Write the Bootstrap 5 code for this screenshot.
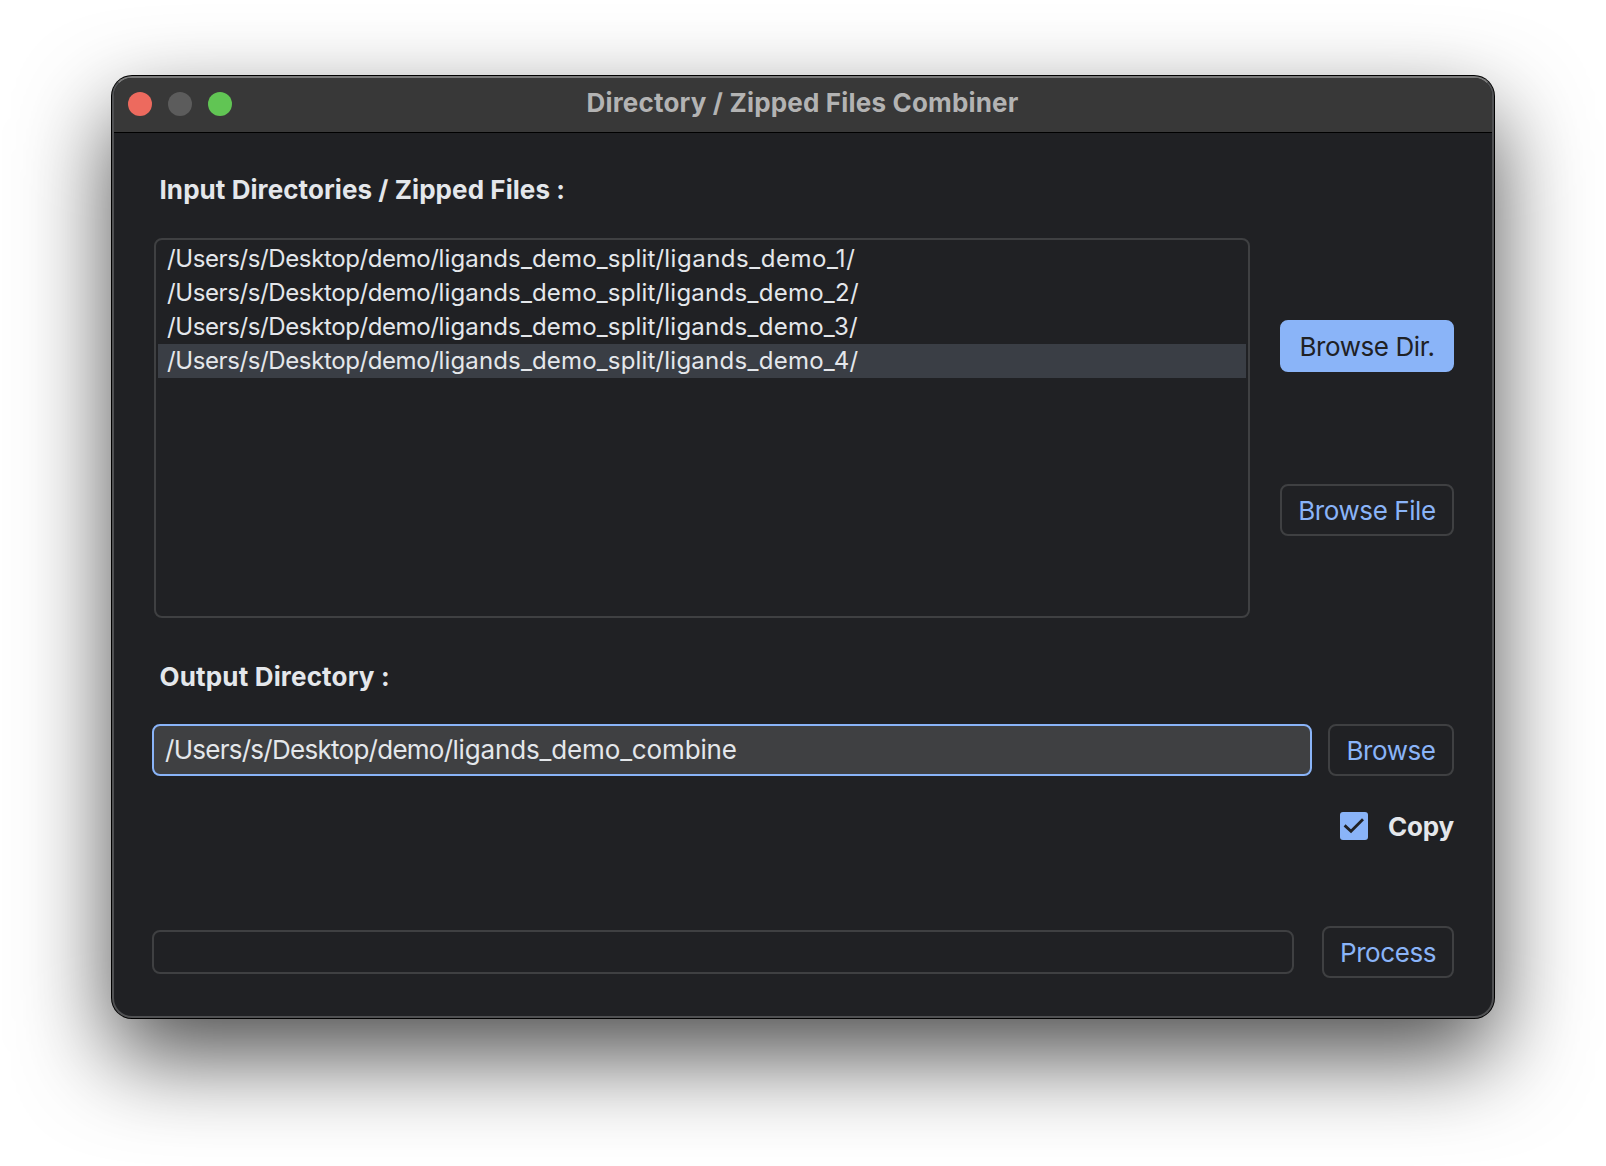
<!DOCTYPE html>
<html lang="en">
<head>
<meta charset="utf-8">
<meta name="viewport" content="width=device-width, initial-scale=1">
<title>Directory / Zipped Files Combiner</title>
<link href="https://cdn.jsdelivr.net/npm/bootstrap@5.3.0/dist/css/bootstrap.min.css" rel="stylesheet">
<style>
  body { background: #fff; font-family: Inter, "Liberation Sans", sans-serif; font-size: 26px; line-height: 32px; color: #e4e7eb; min-height: 100vh; overflow: hidden; }
  .app-window { width: 1382px; height: 942px; margin: 76px 0 0 112px; background: #202124; border: 2px solid #505153; border-top-color: #7a7a7a; border-radius: 20px; box-shadow: 0 0 0 1px #000, 0 38px 92px 0 rgba(0,0,0,.7); }
  .titlebar { height: 55px; padding: 0 14px 2px; background: #383838; border-bottom: 1px solid #000; border-radius: 18px 18px 0 0; }
  .lights { gap: 16px; width: 120px; }
  .light { width: 24px; height: 24px; border-radius: 50%; }
  .light-close { background: #ed6a5e; }
  .light-min { background: #5c5c5c; }
  .light-max { background: #61c554; }
  .titlebar-text { color: #b3b3b3; font-weight: 700; letter-spacing: .18px; margin: 0 1px 2px 0; font-size: 26px; line-height: 32px; }
  .app-body { padding: 41px 38px 0; }
  .field-title { font-size: 26px; line-height: 32px; font-weight: 700; margin: 0; padding-left: 7.5px; letter-spacing: .07px; }
  .field-title-out { letter-spacing: .17px; margin-top: 43px; }
  .path-list { width: 1096px; height: 380px; margin-left: 2px; padding: 2px; border: 2px solid #3f4042; border-radius: 8px; }
  .path-list .list-group-item { background: transparent; border: 0; border-radius: 0; color: #e4e7eb; font-size: 24px; line-height: 34px; height: 34px; padding: 0 9px; white-space: nowrap; }
  .path-list .list-group-item.selected-row { background: #3a3e45; }
  .seg-root { letter-spacing: -.39px; }
  .seg-dir { letter-spacing: .15px; }
  .seg-leaf { letter-spacing: .27px; }
  .seg-leaf-first { letter-spacing: .53px; }
  .list-buttons { width: 174px; padding-top: 82px; gap: 112px; }
  .tool-btn { height: 52px; padding: 2px 0 0; border: 2px solid #3f4042; border-radius: 8px; color: #8ab4f8; background: transparent; font-size: 26px; line-height: 46px; letter-spacing: -.42px; }
  .tool-btn:hover { color: #8ab4f8; border-color: #3f4042; }
  .tool-btn-fill, .tool-btn-fill:hover { background: #8ab4f8; border-color: #8ab4f8; color: #202124; }
  .run-btn { width: 132px; }
  .path-input { width: 1160px; height: 52px; padding: 0 11px; background: #3f4042; border: 2px solid #8ab4f8; border-radius: 8px; color: #e4e7eb; font-size: 26px; line-height: 47px; white-space: nowrap; }
  .path-input .seg-root { letter-spacing: -.73px; }
  .path-input .seg-leaf { letter-spacing: -.14px; }
  .out-row { margin-top: 31px; gap: 16px; }
  .copy-row { margin-top: 34px; gap: 20px; height: 32px; }
  .copy-text { font-weight: 700; letter-spacing: -.2px; padding-top: 2px; }
  .run-row { margin-top: 84px; }
  .run-progress { width: 1142px; height: 44px; background: transparent; border: 2px solid #3f4042; border-radius: 8px; }
</style>
</head>
<body>
<main class="app-window">
  <header class="titlebar d-flex align-items-center justify-content-between">
    <div class="lights d-flex">
      <span class="light light-close"></span>
      <span class="light light-min"></span>
      <span class="light light-max"></span>
    </div>
    <h1 class="titlebar-text">Directory / Zipped Files Combiner</h1>
    <div class="lights"></div>
  </header>

  <div class="app-body d-flex flex-column">
    <h2 class="field-title">Input Directories / Zipped Files :</h2>
    <div class="d-flex justify-content-between mt-3 pt-3">
      <ul class="list-group path-list">
        <li class="list-group-item"><span class="seg-root">/Users/s/Desktop/demo/</span><span class="seg-dir">ligands_demo_split/</span><span class="seg-leaf seg-leaf-first">ligands_demo_1/</span></li>
        <li class="list-group-item"><span class="seg-root">/Users/s/Desktop/demo/</span><span class="seg-dir">ligands_demo_split/</span><span class="seg-leaf">ligands_demo_2/</span></li>
        <li class="list-group-item"><span class="seg-root">/Users/s/Desktop/demo/</span><span class="seg-dir">ligands_demo_split/</span><span class="seg-leaf">ligands_demo_3/</span></li>
        <li class="list-group-item selected-row"><span class="seg-root">/Users/s/Desktop/demo/</span><span class="seg-dir">ligands_demo_split/</span><span class="seg-leaf">ligands_demo_4/</span></li>
      </ul>
      <div class="list-buttons d-flex flex-column">
        <button type="button" class="btn tool-btn tool-btn-fill">Browse Dir.</button>
        <button type="button" class="btn tool-btn">Browse File</button>
      </div>
    </div>

    <h2 class="field-title field-title-out">Output Directory :</h2>
    <div class="out-row d-flex">
      <div class="form-control path-input" role="textbox" tabindex="0" aria-label="Output directory"><span class="seg-root">/Users/s/Desktop/demo/</span><span class="seg-leaf">ligands_demo_combine</span></div>
      <button type="button" class="btn tool-btn flex-grow-1">Browse</button>
    </div>

    <label class="copy-row d-flex justify-content-end align-items-center">
      <svg width="28" height="28" viewBox="0 0 28 28" aria-hidden="true">
        <rect width="28" height="28" rx="3" fill="#8ab4f8"/>
        <path d="M4.6 13.4 11 19.2 23 7.2" fill="none" stroke="#202124" stroke-width="2.8"/>
      </svg>
      <span class="copy-text">Copy</span>
    </label>

    <div class="run-row d-flex justify-content-between align-items-center">
      <div class="progress run-progress" role="progressbar" aria-label="Progress" aria-valuenow="0" aria-valuemin="0" aria-valuemax="100"></div>
      <button type="button" class="btn tool-btn run-btn">Process</button>
    </div>
  </div>
</main>
<script src="https://cdn.jsdelivr.net/npm/bootstrap@5.3.0/dist/js/bootstrap.bundle.min.js"></script>
</body>
</html>
